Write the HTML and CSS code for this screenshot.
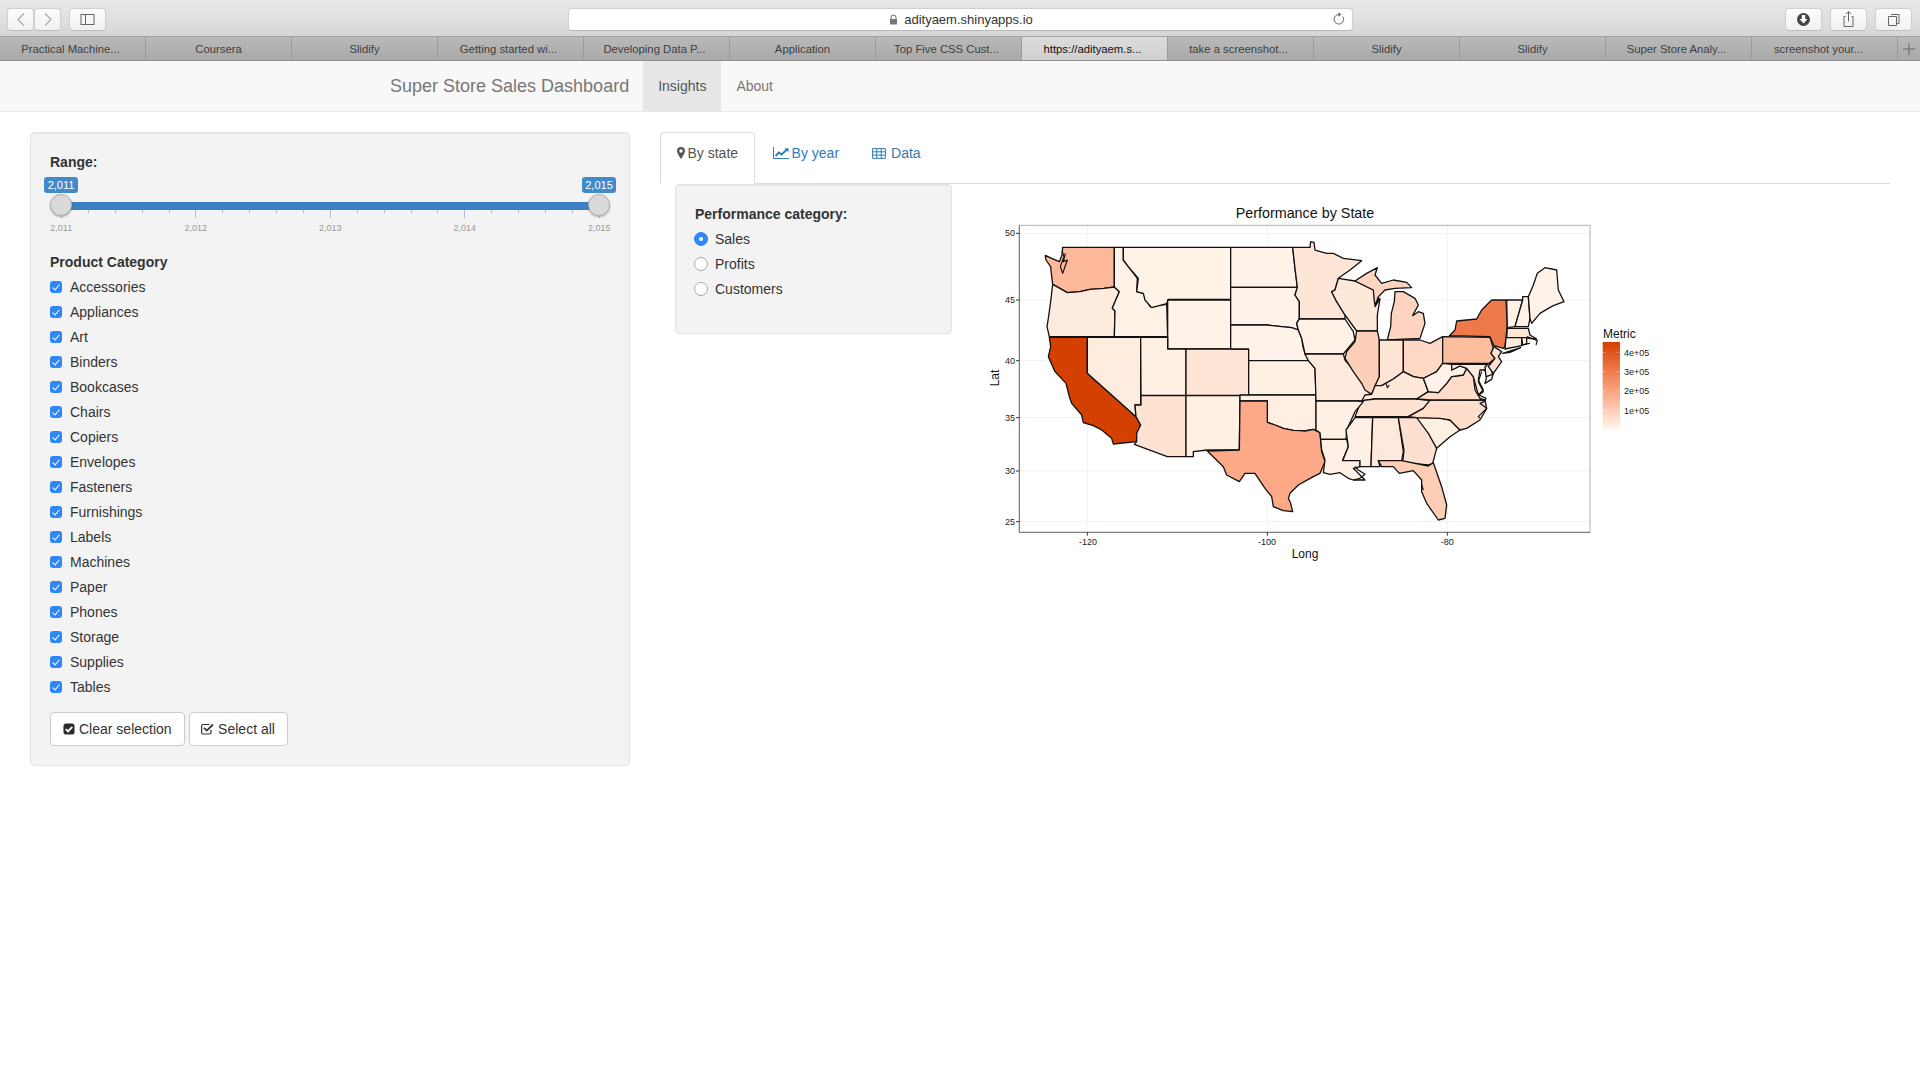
FILE: index.html
```html
<!DOCTYPE html>
<html lang="en">
<head>
<meta charset="utf-8">
<title>Super Store Sales Dashboard</title>
<link rel="stylesheet" href="styles.css">
</head>
<body>
<header class="toolbar">
  <div class="tb-btn tb-back"><svg viewBox="0 0 26 23" width="26" height="23"><path d="M16 5.500 10 11.500l6 6" class="tb-line-light"/></svg></div>
  <div class="tb-btn tb-fwd"><svg viewBox="0 0 26 23" width="26" height="23"><path d="M10 5.500l6 6-6 6" class="tb-line-light"/></svg></div>
  <div class="tb-btn tb-side"><svg viewBox="0 0 37 23" width="37" height="23"><rect x="12" y="6.500" width="13" height="10" class="tb-line"/><path d="M16.500 6.500v10" class="tb-line"/></svg></div>
  <div class="address">
    <span class="address-text"><svg class="lock" viewBox="0 0 9 11" width="9" height="11"><path d="M2 5V3.500a2.500 2.500 0 0 1 5 0V5" class="tb-line"/><rect x="1" y="5" width="7" height="5.500" fill="#777"/></svg>adityaem.shinyapps.io</span>
    <svg class="reload" viewBox="0 0 14 14" width="14" height="14"><path d="M10.800 4.500A4.800 4.800 0 1 1 7 2.500" class="tb-line"/><path d="M6.500 0.200 9.300 2.500 6.500 4.700z" fill="#666"/></svg>
  </div>
  <div class="tb-right">
    <div class="tb-btn tb-wide"><svg viewBox="0 0 37 23" width="37" height="23"><circle cx="18.500" cy="11.500" r="6.500" fill="#444"/><path d="M16.800 7h3.400v4h2.300l-4 4.500-4-4.500h2.300z" fill="#fff"/></svg></div>
    <div class="tb-btn tb-wide"><svg viewBox="0 0 37 23" width="37" height="23"><path d="M15.500 8.500h-1.500v10h9v-10h-1.500M18.500 13.500V3.500M16 6l2.500-2.500L21 6" class="tb-line"/></svg></div>
    <div class="tb-btn tb-wide"><svg viewBox="0 0 37 23" width="37" height="23"><path d="M16 6.500h8v9h-2M13.500 8.500h8v9h-8z" class="tb-line"/></svg></div>
  </div>
</header>
<nav class="tabbar">
  <div class="tab tab-cut">Practical Machine...</div>
  <div class="tab">Coursera</div>
  <div class="tab">Slidify</div>
  <div class="tab tab-cut">Getting started wi...</div>
  <div class="tab tab-cut">Developing Data P...</div>
  <div class="tab">Application</div>
  <div class="tab tab-cut">Top Five CSS Cust...</div>
  <div class="tab tab-cut tab-active">https://adityaem.s...</div>
  <div class="tab tab-cut">take a screenshot...</div>
  <div class="tab">Slidify</div>
  <div class="tab">Slidify</div>
  <div class="tab tab-cut">Super Store Analy...</div>
  <div class="tab tab-cut tab-last">screenshot your...</div>
  <div class="tab-plus"><svg viewBox="0 0 12 12" width="12" height="12"><path d="M6 0v12M0 6h12" class="plus-line"/></svg></div>
</nav>
<nav class="navbar">
  <div class="nav-inner">
    <span class="brand">Super Store Sales Dashboard</span>
    <span class="nav-link nav-current">Insights</span>
    <span class="nav-link">About</span>
  </div>
</nav>
<main class="layout">
  <aside class="well side">
    <div class="field-label">Range:</div>
    <div class="slider">
      <div class="bubbles"><span class="bubble">2,011</span><span class="bubble">2,015</span></div>
      <div class="track"><span class="handle handle-l"></span><span class="handle handle-r"></span></div>
      <div class="ticks">
        <i class="maj"></i><i></i><i></i><i></i><i></i><i class="maj"></i><i></i><i></i><i></i><i></i><i class="maj"></i><i></i><i></i><i></i><i></i><i class="maj"></i><i></i><i></i><i></i><i></i><i class="maj"></i>
      </div>
      <div class="tick-labels"><span>2,011</span><span>2,012</span><span>2,013</span><span>2,014</span><span>2,015</span></div>
    </div>
    <div class="field-label">Product Category</div>
    <ul class="checks">
      <li><span class="cb"></span>Accessories</li>
      <li><span class="cb"></span>Appliances</li>
      <li><span class="cb"></span>Art</li>
      <li><span class="cb"></span>Binders</li>
      <li><span class="cb"></span>Bookcases</li>
      <li><span class="cb"></span>Chairs</li>
      <li><span class="cb"></span>Copiers</li>
      <li><span class="cb"></span>Envelopes</li>
      <li><span class="cb"></span>Fasteners</li>
      <li><span class="cb"></span>Furnishings</li>
      <li><span class="cb"></span>Labels</li>
      <li><span class="cb"></span>Machines</li>
      <li><span class="cb"></span>Paper</li>
      <li><span class="cb"></span>Phones</li>
      <li><span class="cb"></span>Storage</li>
      <li><span class="cb"></span>Supplies</li>
      <li><span class="cb"></span>Tables</li>
    </ul>
    <div class="btn-row">
      <button class="btn"><svg class="btn-ico" viewBox="0 0 12 12" width="12" height="12"><rect x="0.500" y="0.500" width="11" height="11" rx="2.500" fill="#2b2b2b"/><path d="M2.800 6.200 5 8.400 9.300 3.800" class="chk-white"/></svg>Clear selection</button>
      <button class="btn"><svg class="btn-ico btn-ico-wide" viewBox="0 0 13 12" width="13" height="12"><path d="M10 7v2.500a1.500 1.500 0 0 1-1.500 1.500H2A1.500 1.500 0 0 1 .6 9.500V3A1.500 1.500 0 0 1 2 1.500H8.500" class="chk-outline"/><path d="M3 4.800 5.800 7.600 12 1.500" class="chk-dark"/></svg>Select all</button>
    </div>
  </aside>
  <section class="content">
    <div class="tabs">
      <span class="tab-item tab-on"><svg class="tab-ico" viewBox="0 0 8 12" width="8" height="12"><path fill-rule="evenodd" d="M4 0a4 4 0 0 1 4 4c0 1.800-2.600 6-4 8C2.600 10 0 5.800 0 4a4 4 0 0 1 4-4zm0 2.300a1.700 1.700 0 1 0 0 3.400 1.700 1.700 0 0 0 0-3.400z" fill="#555"/></svg>By state</span>
      <span class="tab-item"><svg class="tab-ico" viewBox="0 0 16 12" width="16" height="12"><path d="M.5 0v11.500H16" class="ico-blue"/><path d="M2.500 9 6 5.500l2.500 2L14.500 2" class="ico-blue-bold"/><path d="M11.500 1.200h4v4z" fill="#337ab7"/></svg>By year</span>
      <span class="tab-item tab-data"><svg class="tab-ico tab-ico-data" viewBox="0 0 14 11" width="14" height="11"><path d="M.6.600h12.800v9.800H.6zM.6 3.800h12.800M.6 7.100h12.800M4.800.600v9.800M9.200.600v9.800" class="ico-blue"/></svg>Data</span>
    </div>
    <div class="pane">
      <div class="well perf">
        <div class="field-label">Performance category:</div>
        <div class="radio"><span class="rd rd-on"></span>Sales</div>
        <div class="radio"><span class="rd"></span>Profits</div>
        <div class="radio"><span class="rd"></span>Customers</div>
      </div>
      <svg class="chart" viewBox="0 0 2100 1140" width="700" height="380">
        <defs>
          <linearGradient id="legendFill" x1="0" y1="0" x2="0" y2="1">
            <stop offset="0" stop-color="#d44000"/>
            <stop offset="0.330" stop-color="#ee7a4c"/>
            <stop offset="0.660" stop-color="#fdb597"/>
            <stop offset="1" stop-color="#fff5eb"/>
          </linearGradient>
        </defs>
        <text class="c-title" x="975" y="70" text-anchor="middle">Performance by State</text>
        <rect x="118" y="91" width="1712" height="921" fill="#fff"/>
        <path class="grid" d="M322 91V1012M862 91V1012M1402 91V1012M118 115H1830M118 315H1830M118 497H1830M118 668H1830M118 828H1830M118 980H1830"/>
        <g class="states">
          <path fill="#feb89a" d="M248 157H403V276L372 280 330 283 300 290 262 293 245 283 218 268 214 235 212 215 198 195 196 181 215 190 238 200 246 180Z"/>
          <path fill="#feebdf" d="M218 268 245 283 262 293 300 290 330 283 372 280 403 276 418 290 405 320 397 340 405 348 403 425H208L201 395 205 370 212 320Z"/>
          <path fill="#d44000" d="M208 427H322V535L468 665 482 690 470 715 470 740 400 747 395 730 365 705 340 692 310 683 305 660 275 625 268 605 258 565 225 530 205 485 212 455Z"/>
          <path fill="#fff1e6" d="M403 157H430V195L445 215 472 250 470 290 490 295 510 335 560 328 563 425H403L405 348 397 340 405 320 418 290 403 276Z"/>
          <path fill="#fff2e7" d="M430 157H752V313H565L560 326 515 338 495 315 490 295 470 290 475 250 445 215 430 195Z"/>
          <path fill="#fff3e9" d="M563 315H752V462H563Z"/>
          <path fill="#feecde" d="M322 427H482V630H465L468 665 322 535Z"/>
          <path fill="#fef0e3" d="M482 427H563V462H618V601H483Z"/>
          <path fill="#fee4d5" d="M618 462H806V601H618Z"/>
          <path fill="#fee3d3" d="M483 602H618V785H562L463 748 470 740 470 715 482 690 468 665 465 630H483Z"/>
          <path fill="#fff0e4" d="M618 602H780L778 765H682L640 770V785H618Z"/>
          <path fill="#fff3e9" d="M752 157H938L945 220 952 277H752Z"/>
          <path fill="#fff3e9" d="M752 277H952L945 300 958 320 958 370 950 385 955 405 935 398 905 395 860 390H752Z"/>
          <path fill="#fff2e8" d="M752 390H860L905 395 935 398 955 405 965 430 970 460 985 497H806V462H752Z"/>
          <path fill="#fff0e4" d="M806 497H985L1005 520 1008 600H806Z"/>
          <path fill="#ffefe3" d="M780 600H1008V713L1000 703 975 708 960 707 940 706 925 703 910 700 885 690 862 682V618H780Z"/>
          <path fill="#fda987" d="M780 618H862V682L885 690 910 700 925 703 940 706 960 707 975 708 1000 703 1020 713 1025 770 1035 800 1020 835 1000 845 985 853 955 870 930 895 925 910 932 925 938 950 910 947 880 935 875 905 855 880 825 835 795 835 778 860 740 840 730 815 682 768 778 765Z"/>
          <path fill="#fee6d7" d="M938 157H990L992 140 1002 142 1005 165 1040 175 1060 175 1090 190 1145 197 1110 225 1075 250 1065 285 1055 290 1070 320 1095 360 1095 372H958V320L945 300 952 277 945 220Z"/>
          <path fill="#fff1e6" d="M958 372H1095L1120 410 1125 435 1100 465 1090 477H975L965 430 955 405 950 385Z"/>
          <path fill="#feeadc" d="M975 477H1090L1095 495 1125 530 1150 570 1170 595 1155 618H1008L1005 520 985 497Z"/>
          <path fill="#fee8da" d="M1075 250 1125 258 1180 285 1195 310 1185 335 1200 310 1192 360 1192 408H1130L1095 360 1070 320 1055 290 1065 285Z"/>
          <path fill="#fdd4bf" d="M1125 258 1160 235 1192 218 1185 240 1205 265 1240 255 1280 262 1295 278 1245 280 1215 285 1195 305 1185 332 1182 310 1180 285Z"/>
          <path fill="#fdd4bf" d="M1245 290 1270 290 1305 310 1315 330 1298 362 1315 350 1330 355 1335 385 1320 430 1222 435 1232 395 1234 355 1243 320Z"/>
          <path fill="#fdcfb8" d="M1130 408H1192L1198 435V545L1185 575 1175 598 1155 585 1145 565 1120 530 1095 490 1100 470 1125 440Z"/>
          <path fill="#fee5d6" d="M1198 435H1270V530L1240 552 1205 572H1185L1198 545Z"/>
          <path fill="#fdd8c4" d="M1270 435H1320L1350 445 1388 425V505L1370 530 1350 540 1330 550 1300 545 1270 530Z"/>
          <path fill="#fee8da" d="M1185 572H1205L1240 552 1270 530 1300 545 1330 550 1345 590 1310 612H1185L1145 618 1155 600 1175 598Z"/>
          <path fill="#fee3d3" d="M1145 617 1185 612H1310L1355 617 1330 640 1285 665H1125L1135 640Z"/>
          <path fill="#fff0e5" d="M1008 618H1130L1150 620 1125 650 1100 705 1098 733H1022L1020 713 1008 705Z"/>
          <path fill="#ffefe4" d="M1022 733H1100L1105 755 1088 795H1140L1140 815 1120 820 1155 855 1120 855 1105 850 1080 833 1050 838 1030 833 1035 795 1025 765Z"/>
          <path fill="#fff0e5" d="M1125 668H1178L1173 815H1140V797H1088L1105 755 1098 705Z"/>
          <path fill="#fee9dc" d="M1178 668H1255L1270 770 1265 797H1195L1200 815H1173Z"/>
          <path fill="#fee0d0" d="M1255 668H1330L1370 760 1358 805 1345 810 1268 803 1272 765Z"/>
          <path fill="#fdcdb6" d="M1195 797H1265L1345 813 1360 803 1385 875 1400 930 1395 970 1375 975 1340 925 1325 890 1325 855 1300 827 1258 835 1240 815 1205 815Z"/>
          <path fill="#feefe3" d="M1310 668H1380L1410 675 1440 705 1410 725 1370 760 1345 715Z"/>
          <path fill="#feddcb" d="M1350 615H1515L1520 640 1500 675 1460 700 1440 705 1410 675 1380 670 1310 668 1285 665 1330 640Z"/>
          <path fill="#fedcc9" d="M1310 612 1345 590 1375 593 1400 565 1415 545 1450 540 1460 520 1480 545 1485 585 1500 610 1515 615H1350Z"/>
          <path fill="#fff2e8" d="M1330 550 1350 540 1370 530 1388 505 1415 508V525L1440 513 1460 520 1450 540 1415 545 1400 565 1375 593 1345 590Z"/>
          <path fill="#fdbea0" d="M1388 425 1530 427 1540 460 1533 475 1545 490 1528 505H1388Z"/>
          <path fill="#feebdf" d="M1415 508H1528L1540 535 1535 553 1515 565 1520 545 1515 525 1500 525 1495 555 1510 585 1495 600 1480 545 1460 520 1440 513 1415 525Z"/>
          <path fill="#fff0e4" d="M1528 505 1538 538 1518 545 1515 515Z"/>
          <path fill="#fee0d0" d="M1542 455 1565 470 1555 485 1565 500 1540 535 1525 515 1545 490 1533 475Z"/>
          <path fill="#ee7a4c" d="M1408 422 1425 405 1430 378 1490 372 1505 345 1535 315H1578L1582 390 1575 455 1570 460 1542 452 1530 425Z"/>
          <path fill="#ee7a4c" d="M1568 475 1622 458 1590 472Z"/>
          <path fill="#fff1e6" d="M1580 315H1628L1605 395 1582 398Z"/>
          <path fill="#fff1e6" d="M1628 305H1645L1650 370 1645 395 1605 395 1628 315Z"/>
          <path fill="#fff3e9" d="M1645 305 1660 270 1672 235 1695 218 1730 225 1735 285 1752 320 1720 332 1705 340 1680 355 1655 385 1650 370Z"/>
          <path fill="#fee6d7" d="M1582 400H1645L1650 420 1670 432 1625 428H1580Z"/>
          <path fill="#feeadc" d="M1578 428H1625V452L1575 462Z"/>
          <path fill="#fff1e6" d="M1625 428H1640V447L1628 450Z"/>
          <path class="detail" d="M246 168 252 185 241 215 248 235 262 195 250 200 256 175M1218 565 1222 578 1228 570M1330 885 1325 870M1120 855 1140 850 1155 838 1135 825 1125 815M1505 530 1495 560 1510 590 1497 600 1518 610 1512 620 1500 625 1520 640 1495 665 1500 670M1640 425 1660 432 1672 437 1668 450M1635 447 1650 445"/>
        </g>
        <rect class="frame" x="118" y="91" width="1712" height="921"/>
        <path class="frame-edge" d="M118 91V1012H1830"/>
        <path class="axis-tick" d="M108 115H118M108 315H118M108 497H118M108 668H118M108 828H118M108 980H118M322 1012V1022M862 1012V1022M1402 1012V1022"/>
        <g class="c-tick">
          <text x="105" y="124" text-anchor="end">50</text>
          <text x="105" y="324" text-anchor="end">45</text>
          <text x="105" y="506" text-anchor="end">40</text>
          <text x="105" y="677" text-anchor="end">35</text>
          <text x="105" y="837" text-anchor="end">30</text>
          <text x="105" y="989" text-anchor="end">25</text>
          <text x="324" y="1049" text-anchor="middle">-120</text>
          <text x="861" y="1049" text-anchor="middle">-100</text>
          <text x="1402" y="1049" text-anchor="middle">-80</text>
        </g>
        <text class="c-axis" x="975" y="1088" text-anchor="middle">Long</text>
        <text class="c-axis" x="0" y="0" text-anchor="middle" transform="translate(56 549) rotate(-90)">Lat</text>
        <text class="c-axis" x="1869" y="428">Metric</text>
        <rect x="1868" y="441" width="52" height="260" fill="url(#legendFill)"/>
        <path class="legend-tick" d="M1868 473H1878M1910 473H1920M1868 530H1878M1910 530H1920M1868 588H1878M1910 588H1920M1868 646H1878M1910 646H1920"/>
        <g class="c-tick">
          <text x="1932" y="482">4e+05</text>
          <text x="1932" y="539">3e+05</text>
          <text x="1932" y="598">2e+05</text>
          <text x="1932" y="656">1e+05</text>
        </g>
      </svg>
    </div>
  </section>
</main>
</body>
</html>
```

FILE: styles.css
```css
* { box-sizing: border-box; }
html, body { margin: 0; padding: 0; background: #fff; }
body { font-family: "Liberation Sans", Arial, sans-serif; font-size: 14px; line-height: 20px; color: #333; }

/* browser chrome */
.toolbar { height: 37px; display: flex; align-items: flex-start; padding: 8px 8px 0 7px; background: linear-gradient(#e9e9e9, #d6d6d6); border-bottom: 1px solid #a2a2a2; }
.tb-btn { height: 23px; background: linear-gradient(#fcfcfc, #f1f1f1); border: 1px solid #cfcfcf; border-bottom-color: #bdbdbd; border-radius: 4px; display: flex; align-items: center; justify-content: center; flex: none; }
.tb-btn svg { display: block; flex: none; }
.tb-back, .tb-fwd { width: 27px; }
.tb-side { width: 37px; margin-left: 8px; }
.tb-line { fill: none; stroke: #666; stroke-width: 1; }
.tb-line-light { fill: none; stroke: #a9a9a9; stroke-width: 1.200; }
.address { width: 785px; height: 23px; margin-left: 462px; background: #fff; border: 1px solid #cfcfcf; border-bottom-color: #b9b9b9; border-radius: 4px; display: flex; align-items: center; justify-content: center; position: relative; flex: none; }
.address-text { font-size: 13px; line-height: 21px; color: #333; display: flex; align-items: center; gap: 6px; margin-left: 1px; }
.lock { display: block; }
.reload { position: absolute; right: 6px; top: 3px; }
.tb-right { display: flex; gap: 8px; margin-left: 432px; }
.tb-wide { width: 37px; }

.tabbar { height: 24px; display: flex; background: linear-gradient(#b9b9b9, #a9a9a9); border-bottom: 1px solid #8e8e8e; }
.tab { width: 146px; flex: none; text-align: center; font-size: 11.300px; line-height: 25px; color: #404040; border-right: 1px solid #9a9a9a; white-space: nowrap; overflow: hidden; }
.tab-cut { padding-right: 4px; }
.tab-cut.tab-last { padding-right: 12px; }
.tab-active { background: linear-gradient(#dcdcdc, #d0d0d0); color: #111; }
.tab-plus { flex: 1; display: flex; align-items: center; justify-content: center; }
.plus-line { stroke: #666; stroke-width: 1; fill: none; }

/* navbar */
.navbar { height: 51px; background: #f8f8f8; border-bottom: 1px solid #e7e7e7; }
.nav-inner { width: 1170px; margin: 0 auto; padding-left: 15px; display: flex; height: 50px; }
.brand { font-size: 18px; line-height: 51px; color: #777; margin-right: 14px; white-space: nowrap; }
.nav-link { padding: 0 15px; line-height: 51px; color: #777; }
.nav-current { background: #e7e7e7; color: #555; }

/* layout */
.layout { display: flex; align-items: flex-start; gap: 30px; padding: 20px 30px 0; }
.well { background: #f3f3f3; border: 1px solid #e3e3e3; border-radius: 4px; box-shadow: inset 0 1px 1px rgba(0,0,0,.05); padding: 19px; }
.side { width: 600px; flex: none; }
.field-label { font-weight: 700; color: #333; }

/* slider */
.slider { height: 75px; margin-top: 5px; }
.bubbles { display: flex; justify-content: space-between; margin: 0 -6px; }
.bubble { width: 34px; height: 16px; background: #428bca; color: #fff; border-radius: 3px; font-size: 11px; line-height: 16px; text-align: center; }
.track { height: 8px; margin: 9px 10px 0 11px; background: #3c80c3; position: relative; }
.handle { position: absolute; top: -8px; width: 22px; height: 22px; border-radius: 50%; background: #d9d9d9; border: 1px solid #b3b3b3; box-shadow: 0 1px 2px rgba(0,0,0,.3); }
.handle-l { left: -11px; }
.handle-r { right: -10px; }
.ticks { display: flex; justify-content: space-between; margin: 0 10px 0 11px; height: 8px; }
.ticks i { display: block; width: 1px; height: 3px; background: #b5b9bf; }
.ticks i.maj { height: 8px; background: #a9bfd6; }
.tick-labels { display: flex; margin: 4px 0 0 -56px; font-size: 9px; line-height: 12px; color: #999; }
.tick-labels span { width: 134.500px; text-align: center; flex: none; }

/* checks */
.checks { list-style: none; margin: 3px 0 0; padding: 0; }
.checks li { height: 25px; line-height: 25px; display: flex; align-items: center; }
.cb { width: 12px; height: 12px; margin: -1px 8px 0 0; background: #2f86f6; border-radius: 3px; position: relative; flex: none; }
.cb::after { content: ""; position: absolute; left: 4px; top: 2px; width: 3px; height: 6px; border: solid #fff; border-width: 0 1.500px 1.500px 0; transform: rotate(40deg); }
.btn-row { display: flex; gap: 4.500px; margin-top: 12px; }
.btn { height: 34px; padding: 6px 12px; background: #fff; border: 1px solid #ccc; border-radius: 4px; font-family: inherit; font-size: 14px; line-height: 20px; color: #333; display: flex; align-items: center; white-space: nowrap; }
.btn-ico { margin-right: 4px; flex: none; }
.btn-ico-wide { margin-left: -1px; }
.chk-white { fill: none; stroke: #fff; stroke-width: 1.800; }
.chk-outline { fill: none; stroke: #333; stroke-width: 1.200; }
.chk-dark { fill: none; stroke: #333; stroke-width: 1.800; }

/* tabs */
.content { flex: 1; min-width: 0; }
.tabs { display: flex; height: 52px; border-bottom: 1px solid #ddd; }
.tab-item { height: 52px; padding: 0 15.500px 10px; color: #337ab7; display: flex; align-items: center; white-space: nowrap; margin-right: 2px; }
.tab-on { color: #555; background: #fff; border: 1px solid #ddd; border-bottom-color: #fff; border-radius: 4px 4px 0 0; padding-right: 16px; }
.tab-ico { margin-right: 3px; flex: none; }
.tab-ico-data { margin-right: 5px; }
.ico-blue { fill: none; stroke: #337ab7; stroke-width: 1; }
.ico-blue-bold { fill: none; stroke: #337ab7; stroke-width: 1.800; }

.pane { display: flex; align-items: flex-start; padding-left: 15px; }
.perf { width: 277px; height: 150px; padding: 19px; flex: none; }
.radio { height: 25px; display: flex; align-items: center; }
.perf .field-label { margin-bottom: 2.500px; }
.rd { width: 14px; height: 14px; border-radius: 50%; background: #fff; border: 1px solid #a9a9a9; margin: 0 7px 0 -1px; flex: none; position: relative; }
.rd-on { background: #2f86f6; border-color: #2f86f6; }
.rd-on::after { content: ""; position: absolute; left: 4px; top: 4px; width: 4px; height: 4px; border-radius: 50%; background: #fff; }

/* chart */
.chart { flex: none; margin: 11px 0 0 28px; display: block; font-family: "Liberation Sans", Arial, sans-serif; }
.grid { stroke: #f1f1f1; stroke-width: 3; fill: none; }
.states path { stroke: #111; stroke-width: 3.900; stroke-linejoin: round; }
.states .detail { fill: none; stroke-width: 3.600; }
.frame { fill: none; stroke: #b4b4b4; stroke-width: 3; }
.frame-edge { fill: none; stroke: #707070; stroke-width: 3; }
.axis-tick { stroke: #333; stroke-width: 3; fill: none; }
.legend-tick { stroke: #fff; stroke-opacity: .5; stroke-width: 2; fill: none; }
.c-title { font-size: 43px; fill: #111; }
.c-axis { font-size: 36px; fill: #111; }
.c-tick { font-size: 27px; fill: #222; }
```
